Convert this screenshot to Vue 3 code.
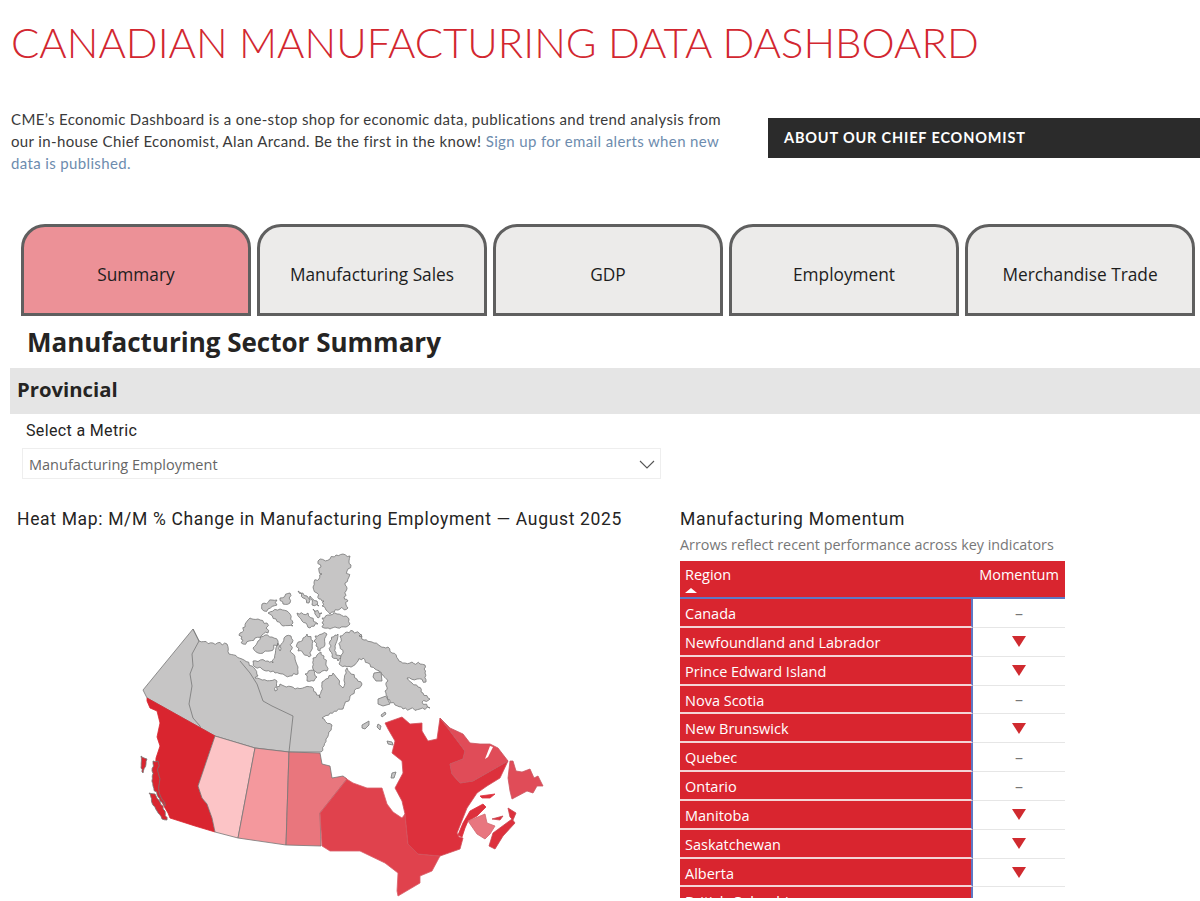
<script setup>
const tabs = [
  { label: 'Summary', active: true },
  { label: 'Manufacturing Sales' },
  { label: 'GDP' },
  { label: 'Employment' },
  { label: 'Merchandise Trade' }
]
const rows = [
  ['Canada', 'flat'],
  ['Newfoundland and Labrador', 'down'],
  ['Prince Edward Island', 'down'],
  ['Nova Scotia', 'flat'],
  ['New Brunswick', 'down'],
  ['Quebec', 'flat'],
  ['Ontario', 'flat'],
  ['Manitoba', 'down'],
  ['Saskatchewan', 'down'],
  ['Alberta', 'down'],
  ['British Columbia', '']
]

// Roughen straight polygon edges into an irregular coastline (deterministic).
let seed = 17
const rnd = () => {
  seed = (seed * 16807) % 2147483647
  return seed / 2147483647 - 0.5
}
function rough(str, amp = 1.6, step = 2.6, open = false) {
  const pts = str.trim().split(/\s+/).map((p) => p.split(',').map(Number))
  const out = []
  const count = open ? pts.length - 1 : pts.length
  for (let i = 0; i < count; i++) {
    const [x1, y1] = pts[i]
    const [x2, y2] = pts[(i + 1) % pts.length]
    const len = Math.hypot(x2 - x1, y2 - y1)
    const n = Math.max(1, Math.ceil(len / step))
    for (let j = 0; j < n; j++) {
      const t = j / n
      const off = j === 0 ? 0 : rnd() * amp * 2
      const x = x1 + (x2 - x1) * t - ((y2 - y1) / (len || 1)) * off
      const y = y1 + (y2 - y1) * t + ((x2 - x1) / (len || 1)) * off
      out.push(x.toFixed(1) + ',' + y.toFixed(1))
    }
  }
  return out.join(' ')
}
const islands = [
  '318,560 330,558 336,554 343,553 350,555 349,560 351,564 347,570 349,576 345,582 346,590 344,596 348,600 346,604 348,607 340,608 330,613 326,609 322,605 324,600 319,598 317,592 313,586 314,581 319,578 322,573 319,570 321,566',
  '322,617 330,614 337,613 346,615 349,618 350,623 346,626 335,626 330,628 324,627 322,622',
  '240,632 245,626 250,617 258,618 267,622 268,632 262,634 255,637 249,640 243,643 241,638',
  '253,647 258,640 265,634 272,636 278,640 280,650 284,637 291,635 292,642 290,650 295,658 298,666 298,673 290,675 283,673 275,672 262,668 255,666 253,660 268,660 273,662 278,642 270,650 258,652',
  '297,643 303,637 307,633 313,640 311,650 309,656 303,652 298,650',
  '315,635 322,633 327,633 325,643 320,650 316,645',
  '313,657 321,651 326,662 327,670 320,672 313,668',
  '305,673 313,669 317,676 314,680 307,680',
  '262,603 272,599 277,599 277,604 268,608 264,610',
  '268,612 280,608 287,610 293,622 293,625 283,625 276,618',
  '280,597 290,592 290,602 283,603',
  '298,590 307,595 309,602 303,597',
  '310,595 317,600 319,605 312,604',
  '297,612 308,612 318,623 310,627 302,620',
  '313,608 322,612 318,617',
  '330,640 335,634 338,633 335,645 336,654 342,657 338,660 332,656 330,650',
  '340,635 347,631 353,630 361,634 364,639 372,641 380,645 388,646 392,652 398,658 405,662 412,661 420,663 425,664 425,672 426,681 417,678 407,677 412,682 418,686 423,692 430,698 422,701 430,707 420,708 410,708 403,708 395,704 387,698 385,690 388,680 382,673 375,668 368,662 363,657 358,660 353,665 345,665 339,663 343,652 340,645'
].map((p) => rough(p))
const smallIslands = [
  '374,672 381,671 382,680 376,680 373,676',
  '378,698 386,695 390,703 383,705 378,703',
  '381,714 385,711 386,713 382,716',
  '362,724 369,720 369,724 365,728 362,727',
  '378,723 381,725 380,729 377,726',
  '392,772 396,771 394,777 391,777',
  '387,740 392,741 393,744 388,743',
  '359,635 361,633 362,636'
]
const territories = '193,628 ' + rough('199,640 213,642 227,643 229,653 242,658 252,665 258,675 255,677 277,680 275,690 280,683 295,688 312,686 320,697 322,681 333,672 343,687 347,667 362,683 350,695 343,708 330,712 322,717 332,724 326,738 321,751', 1.4, 2.6, true) + ' 321,751 289,751 255,747 215,735 147,697 143,689'
</script>

<template>
  <div class="page">
    <h1 class="headline">CANADIAN MANUFACTURING DATA DASHBOARD</h1>
    <div class="intro-row">
      <p class="intro">
        CME’s Economic Dashboard is a one-stop shop for economic data, publications and trend analysis from
        our in-house Chief Economist, Alan Arcand. Be the first in the know!
        <a class="link">Sign up for email alerts when new data is published.</a>
      </p>
      <div class="about">ABOUT OUR CHIEF ECONOMIST</div>
    </div>

    <nav class="tabs">
      <div v-for="t in tabs" :key="t.label" class="tab" :class="{ active: t.active }">{{ t.label }}</div>
    </nav>

    <h2 class="title">Manufacturing Sector Summary</h2>
    <div class="band">Provincial</div>

    <div class="slicer">
      <div class="slicer-label">Select a Metric</div>
      <div class="select">
        <span>Manufacturing Employment</span>
        <svg width="16" height="9" viewBox="0 0 16 9"><path d="M1 1l7 7 7-7" fill="none" stroke="#555" stroke-width="1.1"/></svg>
      </div>
    </div>

    <div class="columns">
      <section class="map-col">
        <div class="din">Heat Map: M/M % Change in Manufacturing Employment — August 2025</div>
        <svg class="map" width="660" height="371" viewBox="0 530 660 371">
          <g stroke="#767676" stroke-width=".8" stroke-linejoin="round">
            <!-- Territories -->
            <polygon fill="#c6c5c5" :points="territories" />
            <polyline fill="none" points="193,628 199,640 192,653 193,665 190,673 192,685 189,703 193,717 200,725 201,730" />
            <polyline fill="none" points="240,660 250,672 257,683 263,700 272,705 293,715 289,751" />
            <!-- Islands -->
            <polygon v-for="(p, i) in islands" :key="i" fill="#c6c5c5" :points="p" />
            <polygon v-for="(p, i) in smallIslands" :key="'s' + i" fill="#c6c5c5" :points="p" />
            <!-- BC -->
            <polygon fill="#d9252f" stroke="#d9252f" points="147,697 215,735 198,785 202,797 207,803 212,817 215,831 195,825 170,817 168,812 165,807 160,797 158,787 155,777 156,757 160,745 157,736 160,722 157,710 150,707 147,700" />
            <polygon fill="#d9252f" :points="rough('153,760 158,760 159,775 159,790 165,805 160,800 153,785 152,770', 1)" />
            <polygon fill="#d9252f" :points="rough('149,792 155,793 160,801 165,810 167,819 162,818 157,810 152,802', .8)" />
            <polygon fill="#d9252f" :points="rough('141,755 147,758 146,763 143,772 141,767', .6)" />
            <!-- Alberta -->
            <polygon fill="#fcc4c6" points="215,735 255,747 238,837 215,831 212,817 207,803 202,797 198,785" />
            <!-- Sask -->
            <polygon fill="#f4989d" points="255,747 289,751 286,844 238,837" />
            <!-- Manitoba -->
            <polygon fill="#e9767d" points="289,751 320,752 322,763 330,765 332,777 343,775 347,778 320,812 321,845 286,844" />
            <!-- Ontario -->
            <polygon fill="#e0424d" stroke="#d8606a" points="347,778 345,777 353,782 367,787 382,787 387,803 393,811 402,817 405,813 408,843 418,853 440,855 432,870 420,875 420,882 398,895 397,890 398,872 385,862 360,850 347,850 330,850 322,845 320,812" />
            <!-- Quebec -->
            <polygon fill="#dd303c" stroke="#d0505a" points="385,722 402,716 410,723 422,722 422,730 428,740 437,738 440,717 450,730 465,750 463,758 450,763 452,773 460,782 473,780 508,760 500,777 487,785 477,792 467,807 457,832 459,836 463,837 460,848 440,855 418,853 408,843 405,813 402,800 395,787 403,772 402,760 392,752 395,740 388,728" />
            <polygon fill="#dd303c" stroke="#dd303c" points="458,834 463,822 470,810 483,803 486,806 477,815 468,820 465,827 462,836" />
            <polygon fill="#dd303c" stroke="#dd303c" points="480,795 495,793 490,797 482,797" />
            <!-- Labrador -->
            <polygon fill="#e04c58" stroke="#c95560" points="440,717 450,727 463,733 470,742 480,743 490,743 498,747 508,760 473,780 460,782 452,773 450,763 463,758 465,750 450,730" />
            <polygon fill="#fff" stroke="none" points="490,745 493,746 488,756 485,758" />
            <!-- Newfoundland -->
            <polygon fill="#e04c58" stroke="#c95560" points="510,760 513,760 516,770 522,771 530,768 534,777 538,775 543,785 537,785 533,792 527,790 512,798 510,790 508,777" />
            <!-- NB -->
            <polygon fill="#e8767f" stroke="#d06870" points="468,820 485,813 487,822 495,825 490,833 485,838 477,833" />
            <!-- NS -->
            <polygon fill="#dd303c" stroke="#c84650" points="489,845 493,832 512,818 515,822 503,835 495,848" />
            <polygon fill="#dd303c" stroke="#c84650" points="508,807 516,812 513,819 510,816" />
            <polygon fill="#dd303c" stroke="#c84650" points="492,818 503,815 500,819" />
          </g>
        </svg>
      </section>

      <section class="table-col">
        <div class="din">Manufacturing Momentum</div>
        <div class="subtitle">Arrows reflect recent performance across key indicators</div>
        <div class="table">
          <div class="thead">
            <div class="th-region">Region<i class="sort"></i></div>
            <div class="th-mom">Momentum</div>
          </div>
          <div v-for="r in rows" :key="r[0]" class="row">
            <div class="region">{{ r[0] }}</div>
            <div class="mom">
              <i v-if="r[1] === 'down'" class="down"></i>
              <span v-else-if="r[1] === 'flat'" class="flat">–</span>
            </div>
          </div>
        </div>
      </section>
    </div>
  </div>
</template>

<style>
html, body { margin: 0; background: #fff; overflow: hidden; }
</style>

<style scoped>
.page { width: 1200px; height: 901px; overflow: hidden; font-family: "Open Sans", sans-serif; color: #252423; }
.headline {
  margin: 0; padding: 15px 0 0 11px; height: 83px; box-sizing: border-box;
  font: 300 41.9px/54px Lato, sans-serif; color: #d22730; white-space: nowrap;
}
.intro-row { display: flex; height: 126px; padding-top: 25px; box-sizing: border-box; }
.intro {
  margin: 0; padding-left: 11px; width: 720px; flex: none;
  font: 400 15px/22px Lato, sans-serif; letter-spacing: .36px; color: #3a3a3a;
}
.link { color: #6d8cae; }
.about {
  margin: 10px 0 0 37px; width: 432px; height: 40px; box-sizing: border-box; padding-left: 16px;
  background: #2b2b2b; color: #fff; font: 700 14.5px/40px Lato, sans-serif; letter-spacing: .84px;
}
.tabs { display: flex; gap: 6px; margin: 15px 0 0 21px; }
.tab {
  width: 230px; height: 92px; box-sizing: border-box; border: 3px solid #5f5f5f; border-radius: 24px 24px 0 0;
  background: #ecebea; color: #1d1d1d; display: flex; align-items: center; justify-content: center;
  font-size: 17.3px; padding-top: 8px;
}
.tab.active { background: #ec9197; }
.title { margin: 8px 0 0 27px; font-size: 26px; line-height: 36px; font-weight: 700; color: #252423; height: 44px; }
.band {
  margin-left: 10px; height: 46px; background: #e5e5e5; padding-left: 7px; box-sizing: border-box;
  font-size: 20.3px; line-height: 42px; font-weight: 700;
}
.slicer { padding-left: 22px; }
.slicer-label { padding: 7px 0 0 4px; height: 28px; box-sizing: border-box; font: 400 16px/20px Roboto, sans-serif; letter-spacing: .35px; }
.select {
  margin-top: 6px; width: 639px; height: 31px; box-sizing: border-box; border: 1px solid #eeeeee;
  display: flex; align-items: center; justify-content: space-between; padding: 1px 5px 0 6px;
  font-size: 14.5px; color: #666;
}
.columns { display: flex; padding-top: 28px; }
.map-col { width: 680px; flex: none; }
.din { font: 400 17.5px/24px Roboto, sans-serif; letter-spacing: .66px; color: #252423; white-space: nowrap; }
.map-col .din { padding-left: 17px; }
.table-col .din { letter-spacing: .75px; }
.map { display: block; }
.subtitle { font-size: 14.35px; line-height: 20px; color: #777; margin-top: 4px; }
.table { margin-top: 6px; width: 385px; height: 337px; overflow: hidden; color: #fff; font-size: 14.5px; }
.thead { display: grid; grid-template-columns: 293px 92px; height: 38px; background: #d9252f; border-bottom: 2px solid #5f78c4; box-sizing: border-box; }
.th-region { padding: 3px 0 0 5px; line-height: 22px; }
.th-mom { text-align: center; line-height: 22px; padding-top: 3px; }
.sort { display: block; width: 0; height: 0; margin: 2px 0 0 0; border: 6px solid transparent; border-top: 0; border-bottom: 5px solid #fff; }
.row { display: grid; grid-template-columns: 293px 92px; height: 28.85px; }
.region {
  background: #d9252f; border-right: 2px solid #5f78c4; border-bottom: 2px solid #f4d5d6; box-sizing: border-box;
  padding-left: 5px; line-height: 29px; white-space: nowrap; overflow: hidden;
}
.mom { display: flex; align-items: center; justify-content: center; border-bottom: 1px solid #e6e6e6; box-sizing: border-box; }
.down { width: 0; height: 0; border: 7px solid transparent; border-bottom: 0; border-top: 11px solid #d02a2f; }
.flat { color: #777; font-size: 16px; line-height: 1; }
</style>
